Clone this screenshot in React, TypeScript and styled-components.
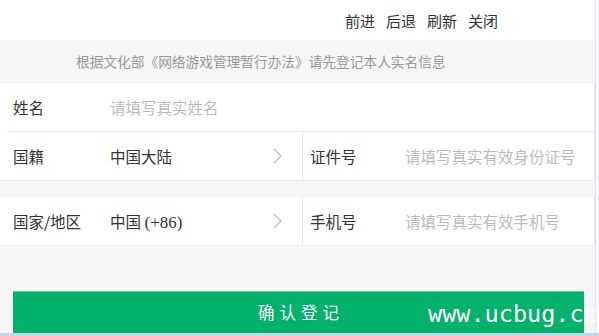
import { createGlobalStyle } from 'styled-components';
import styled from 'styled-components';

const GlobalStyle = createGlobalStyle`
    html, body {
        margin: 0;
        padding: 0;
        background: #f6f6f6;
    }
    body {
        font-family: "Noto Sans CJK SC", "Noto Sans", sans-serif;
    }
`

const Screen = styled.div`
    position: relative;
    width: 599px;
    height: 336px;
    overflow: hidden;
    display: flex;
    flex-direction: column;
    background: #f6f6f6;
`

const Body = styled.div`
    flex: 1;
    display: flex;
`

const Main = styled.div`
    width: 595px;
    display: flex;
    flex-direction: column;
`

const EdgeStrip = styled.div`
    flex: 1;
    border-left: 1px solid #dfe5ef;
    background: #f7f8fb;
`

const BottomStrip = styled.div`
    height: 3px;
    background: #c8d4ea;
`

const TopBar = styled.div`
    height: 40px;
    background: #fff;
    display: flex;
    justify-content: flex-end;
    align-items: center;
    gap: 11px;
    padding-right: 97px;
`

const NavLink = styled.span`
    font-size: 15px;
    color: #333;
    cursor: pointer;
`

const Notice = styled.div`
    height: 42px;
    display: flex;
    align-items: center;
    padding-left: 76px;
    font-size: 13.7px;
    color: #999;
    border-bottom: 1px solid #ececec;
`

const Card = styled.div<{ $gap?: number }>`
    background: #fff;
    margin-top: ${p => p.$gap ?? 0}px;
    border-bottom: 1px solid #ebebeb;
    border-right: 1px solid #e6e6e6;
`

const FullRow = styled.div`
    height: 48px;
    display: flex;
    align-items: center;
    margin-left: 7px;
    padding-left: 6px;
    border-bottom: 1px solid #e6e6e6;
`

const SplitRow = styled.div`
    height: 48px;
    display: grid;
    grid-template-columns: 302px 1fr;
`

const Cell = styled.div<{ $divider?: boolean }>`
    display: flex;
    align-items: center;
    padding-left: ${p => (p.$divider ? 7 : 13)}px;
    border-left: ${p => (p.$divider ? '1px solid #e6e6e6' : 'none')};
`

const Label = styled.span<{ $w: number }>`
    width: ${p => p.$w}px;
    flex-shrink: 0;
    font-size: 15.5px;
    color: #333;
`

const Placeholder = styled.span`
    font-size: 15.5px;
    color: #bbb;
`

const Value = styled.span`
    flex: 1;
    font-size: 15.5px;
    color: #333;
`

const Serif = styled.span`
    font-family: "Liberation Serif", serif;
    font-size: 17px;
`

const Chevron = styled.svg`
    width: 9px;
    height: 16px;
    margin-right: 20px;
`

const ButtonArea = styled.div`
    flex: 1;
    display: flex;
    align-items: flex-end;
    padding-left: 13px;
`

const ConfirmButton = styled.button`
    width: 571px;
    height: 42px;
    border: none;
    border-top: 1px solid #5fcf9a;
    background: #00b26a;
    color: #fff;
    font-family: "Noto Sans CJK SC", sans-serif;
    font-size: 16.5px;
    letter-spacing: 5px;
    padding: 0 0 2px 5px;
`

const Watermark = styled.div`
    position: absolute;
    left: 428px;
    top: 303px;
    font-family: "DejaVu Sans Mono", monospace;
    font-size: 23.5px;
    line-height: 1;
    color: #fff;
    white-space: nowrap;
    pointer-events: none;
`

const Arrow = () => (
    <Chevron viewBox="0 0 9 16">
        <path d="M1 1 L8 8 L1 15" fill="none" stroke="#bbb" strokeWidth="1.3" />
    </Chevron>
)

export default function App() {
    return (
        <>
            <GlobalStyle />
            <Screen>
                <Body>
                    <Main>
                        <TopBar>
                            <NavLink>前进</NavLink>
                            <NavLink>后退</NavLink>
                            <NavLink>刷新</NavLink>
                            <NavLink>关闭</NavLink>
                        </TopBar>
                        <Notice>根据文化部《网络游戏管理暂行办法》请先登记本人实名信息</Notice>
                        <Card>
                            <FullRow>
                                <Label $w={97}>姓名</Label>
                                <Placeholder>请填写真实姓名</Placeholder>
                            </FullRow>
                            <SplitRow>
                                <Cell>
                                    <Label $w={97}>国籍</Label>
                                    <Value>中国大陆</Value>
                                    <Arrow />
                                </Cell>
                                <Cell $divider>
                                    <Label $w={95}>证件号</Label>
                                    <Placeholder>请填写真实有效身份证号</Placeholder>
                                </Cell>
                            </SplitRow>
                        </Card>
                        <Card $gap={16}>
                            <SplitRow>
                                <Cell>
                                    <Label $w={97}>国家/地区</Label>
                                    <Value>中国 <Serif>(+86)</Serif></Value>
                                    <Arrow />
                                </Cell>
                                <Cell $divider>
                                    <Label $w={95}>手机号</Label>
                                    <Placeholder>请填写真实有效手机号</Placeholder>
                                </Cell>
                            </SplitRow>
                        </Card>
                        <ButtonArea>
                            <ConfirmButton>确认登记</ConfirmButton>
                        </ButtonArea>
                    </Main>
                    <EdgeStrip />
                </Body>
                <BottomStrip />
                <Watermark>www.ucbug.cc</Watermark>
            </Screen>
        </>
    )
}
